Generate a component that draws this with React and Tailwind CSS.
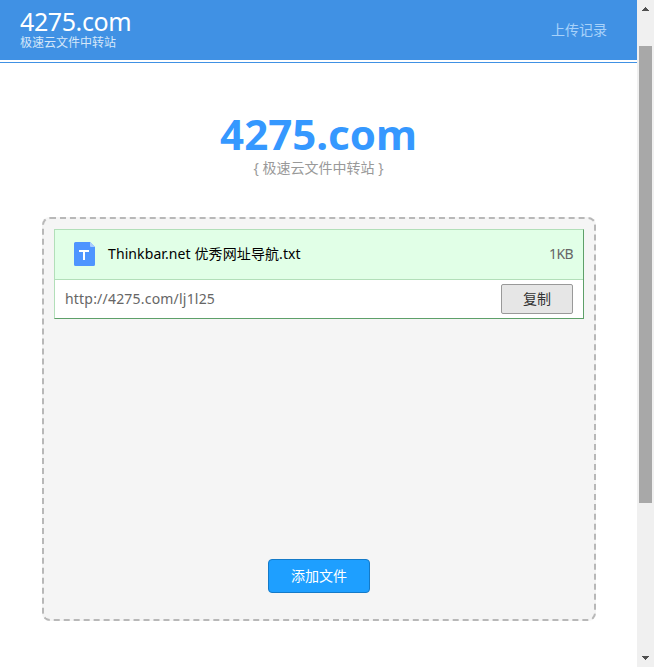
import { useState } from "react";

const files = [
  { name: "Thinkbar.net 优秀网址导航.txt", size: "1KB", url: "http://4275.com/lj1l25" },
];

function TxtIcon() {
  return (
    <svg width="21" height="24" viewBox="0 0 21 24" className="shrink-0">
      <path d="M1.5 0H16L21 5V22.5A1.5 1.5 0 0 1 19.5 24H1.5A1.5 1.5 0 0 1 0 22.5V1.5A1.5 1.5 0 0 1 1.5 0Z" fill="#4e95ff" />
      <path d="M16 0L21 5H17A1 1 0 0 1 16 4Z" fill="#a9ccff" />
      <path d="M5 9H15M10 9V18" stroke="#fff" strokeWidth="2" fill="none" />
    </svg>
  );
}

function Header() {
  return (
    <header className="border-b border-[#4091e4] pb-0.5">
      <div className="flex h-[60px] justify-between bg-[#4091e4] pr-[30px] pl-5">
        <div className="pt-2">
          <div className="text-[25px] leading-[26px] tracking-[-0.4px] text-white">4275.com</div>
          <div className="pt-px text-xs leading-4 text-[#d5e7f9]">极速云文件中转站</div>
        </div>
        <a href="#" className="text-sm leading-[60px] text-[#a8d2fa]">上传记录</a>
      </div>
    </header>
  );
}

function FileCard({ file }) {
  const [copied, setCopied] = useState(false);

  const copyUrl = () => {
    navigator.clipboard?.writeText(file.url);
    setCopied(true);
  };

  return (
    <div className="h-[90px] border border-t-[#b2dfb9] border-r-[#5ea069] border-b-[#5ea069] border-l-[#b2dfb9] bg-white">
      <div className="flex h-[50px] items-center border-b border-[#b2dfb9] bg-[#e1ffe7] pr-2.5 pb-px pl-[19px]">
        <TxtIcon />
        <span className="ml-[13px] text-sm tracking-[0.1px] text-black">{file.name}</span>
        <span className="ml-auto text-sm tracking-[-0.6px] text-[#666]">{file.size}</span>
      </div>
      <div className="flex h-[38px] items-center justify-between pr-2.5 pl-2.5">
        <span className="text-sm tracking-[0.2px] text-[#666]">{file.url}</span>
        <button
          onClick={copyUrl}
          className="h-[30px] w-[72px] cursor-pointer rounded-xs border border-[#999] bg-[#e6e6e6] text-sm text-[#333]"
        >
          {copied ? "已复制" : "复制"}
        </button>
      </div>
    </div>
  );
}

function Scrollbar() {
  return (
    <div className="flex w-[17px] shrink-0 flex-col items-center bg-[#f0f0f0]">
      <svg width="17" height="46" viewBox="0 0 17 46" shapeRendering="crispEdges">
        <path d="M5 11H12V10H11V9H10V8H9V7H8V8H7V9H6V10H5Z" fill="#505050" />
      </svg>
      <div className="h-[457px] w-[13px] bg-[#a8a8a8]" />
      <svg width="17" height="17" viewBox="0 0 17 17" className="mt-auto" shapeRendering="crispEdges">
        <path d="M5 6H12V7H11V8H10V9H9V10H8V9H7V8H6V7H5Z" fill="#505050" />
      </svg>
    </div>
  );
}

export default function App() {
  return (
    <div className="flex h-[667px] w-[654px] overflow-hidden bg-white font-['Noto_Sans','Noto_Sans_CJK_SC',sans-serif]">
      <div className="min-w-0 flex-1">
        <Header />

        <div className="pt-[47px] text-center">
          <h1 className="text-[42px] leading-[48px] font-bold text-[#3598ff]">4275.com</h1>
          <p className="text-sm leading-5 text-[#999]">{"{ 极速云文件中转站 }"}</p>
        </div>

        {/* Upload area */}
        <div className="mt-[39px] mr-[41px] ml-[42px] flex h-[404px] flex-col rounded-lg border-2 border-dashed border-[#b8b8b8] bg-[#f5f5f5] p-2.5">
          {files.map((file) => (
            <FileCard key={file.url} file={file} />
          ))}
          <button className="mx-auto mt-auto mb-4 h-[34px] w-[102px] cursor-pointer rounded border border-[#147ac8] bg-[#1e9fff] text-sm text-white">
            添加文件
          </button>
        </div>
      </div>

      <Scrollbar />
    </div>
  );
}
